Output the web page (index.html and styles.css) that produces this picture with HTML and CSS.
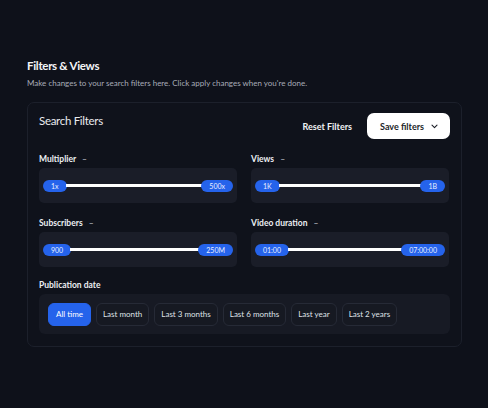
FILE: index.html
```html
<!DOCTYPE html>
<html>
<head>
<meta charset="utf-8">
<link rel="stylesheet" href="styles.css">
</head>
<body>
<div class="page">
  <h1 class="title">Filters &amp; Views</h1>
  <p class="subtitle">Make changes to your search filters here. Click apply changes when you're done.</p>
  <div class="card">
    <div class="card-head">
      <div class="card-title">Search Filters</div>
      <div class="actions">
        <button class="reset">Reset Filters</button>
        <button class="save">Save filters
          <svg class="chev" width="7" height="5" viewBox="0 0 7 5"><path d="M1 1.2 L3.5 3.6 L6 1.2" fill="none" stroke="#1b1e27" stroke-width="1.1" stroke-linecap="round" stroke-linejoin="round"/></svg>
        </button>
      </div>
    </div>
    <div class="grid">
      <div class="field">
        <div class="label">Multiplier <span class="dash">–</span></div>
        <div class="slider-box">
          <span class="pill">1x</span><span class="track"></span><span class="pill">500x</span>
        </div>
      </div>
      <div class="field">
        <div class="label">Views <span class="dash">–</span></div>
        <div class="slider-box">
          <span class="pill">1K</span><span class="track"></span><span class="pill">1B</span>
        </div>
      </div>
      <div class="field">
        <div class="label">Subscribers <span class="dash">–</span></div>
        <div class="slider-box">
          <span class="pill">900</span><span class="track"></span><span class="pill">250M</span>
        </div>
      </div>
      <div class="field">
        <div class="label">Video duration <span class="dash">–</span></div>
        <div class="slider-box">
          <span class="pill">01:00</span><span class="track"></span><span class="pill">07:00:00</span>
        </div>
      </div>
    </div>
    <div class="field pub">
      <div class="label">Publication date</div>
      <div class="chips">
        <button class="chip active">All time</button>
        <button class="chip">Last month</button>
        <button class="chip">Last 3 months</button>
        <button class="chip">Last 6 months</button>
        <button class="chip">Last year</button>
        <button class="chip">Last 2 years</button>
      </div>
    </div>
  </div>
</div>
</body>
</html>
```

FILE: styles.css
```css
* { box-sizing: border-box; }
html, body { margin: 0; padding: 0; }
body {
  background: #0e111a;
  width: 488px;
  height: 408px;
  font-family: "Lato", "Inter", sans-serif;
  color: #f1f2f5;
}
.page {
  padding: 59px 26px 0 27px;
}
.title {
  margin: 0;
  font-size: 11.5px;
  font-weight: 700;
  line-height: 14px;
  letter-spacing: -0.3px;
  color: #f4f5f7;
}
.subtitle {
  margin: 5px 0 0;
  font-size: 8px;
  line-height: 11px;
  color: #a8acb8;
}
.card {
  margin-top: 13px;
  width: 435px;
  height: 245px;
  border: 1px solid #1c202b;
  border-radius: 7px;
  background: #0f121b;
  padding: 10px 11px 12px 11px;
}
.card-head {
  display: flex;
  justify-content: space-between;
  align-items: center;
  height: 26px;
}
.card-title {
  font-size: 11.5px;
  font-weight: 400;
  letter-spacing: -0.3px;
  color: #e9eaee;
  margin-top: -11px;
}
.actions {
  display: flex;
  align-items: center;
  gap: 15px;
}
.reset {
  background: none;
  border: 0;
  padding: 0;
  font-family: inherit;
  font-size: 9px;
  font-weight: 700;
  color: #f1f2f5;
}
.save {
  display: flex;
  align-items: center;
  gap: 7px;
  height: 26px;
  width: 83px;
  justify-content: center;
  background: #ffffff;
  border: 0;
  border-radius: 7px;
  font-family: inherit;
  font-size: 9px;
  font-weight: 700;
  color: #1b1e27;
  padding: 0 0 0 1px;
}
.grid {
  margin-top: 15px;
  display: grid;
  grid-template-columns: 198px 198px;
  column-gap: 14px;
  row-gap: 15px;
}
.label {
  font-size: 8.5px;
  font-weight: 700;
  line-height: 11px;
  color: #eceef2;
  margin-bottom: 3px;
}
.dash {
  font-weight: 400;
  color: #b9bcc6;
  margin-left: 4px;
}
.slider-box {
  height: 35px;
  background: #1a1d28;
  border-radius: 5px;
  display: flex;
  align-items: center;
  padding: 0 4px;
}
.pill {
  flex: none;
  height: 12px;
  padding: 0 8px;
  border-radius: 6px;
  background: #2563eb;
  color: #eaf0ff;
  font-size: 7px;
  line-height: 12px;
}
.track {
  flex: 1;
  height: 3px;
  background: #ffffff;
  margin: 0 -1px;
}
.pub {
  margin-top: 13px;
}
.pub .label {
  margin-bottom: 3px;
}
.chips {
  height: 40px;
  background: #171a24;
  border-radius: 6px;
  display: flex;
  align-items: center;
  gap: 5px;
  padding: 0 9px;
}
.chip {
  height: 23px;
  padding: 0 6px;
  background: #161922;
  border: 1px solid #262a36;
  border-radius: 6px;
  font-family: inherit;
  font-size: 8px;
  color: #dfe1e7;
}
.chip.active {
  background: #2563eb;
  border-color: #2563eb;
  color: #ffffff;
  padding: 0 7px;
}
```
